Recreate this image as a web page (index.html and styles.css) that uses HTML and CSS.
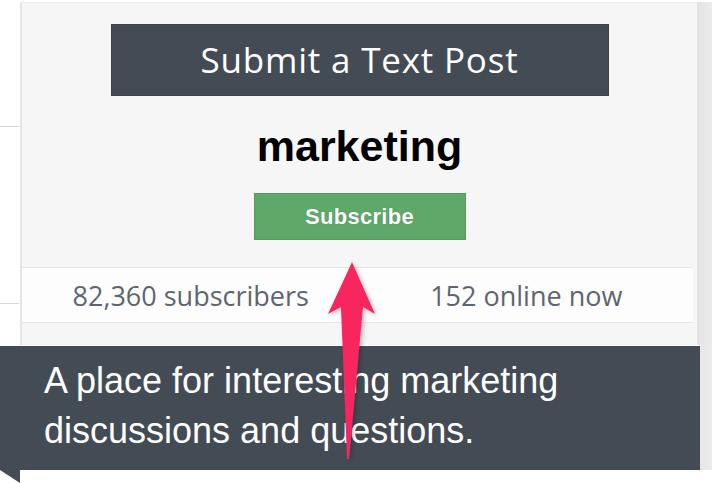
FILE: index.html
```html
<!DOCTYPE html>
<html lang="en">
<head>
<meta charset="UTF-8">
<title>marketing</title>
<link rel="stylesheet" href="styles.css">
</head>
<body>
  <div class="page">
    <div class="top">
      <div class="gutter">
        <span class="rule rule-a"></span>
        <span class="rule rule-b"></span>
      </div>
      <div class="panel">
        <div class="submit">Submit a Text Post</div>
        <h1 class="name">marketing</h1>
        <div class="subscribe">Subscribe</div>
        <div class="stats">
          <span>82,360 subscribers</span>
          <span>152 online now</span>
        </div>
      </div>
      <div class="scroll"></div>
    </div>
    <div class="bottom">
      <div class="callout">
        <p>A place for interesting marketing<br>discussions and questions.</p>
      </div>
      <div class="scroll scroll-low"></div>
    </div>
    <div class="tail"></div>

    <svg class="arrow" width="70" height="210" viewBox="320 255 70 210">
      <defs>
        <filter id="shade" x="-30%" y="-10%" width="160%" height="120%">
          <feDropShadow dx="2" dy="2" stdDeviation="2" flood-color="#000" flood-opacity="0.25"/>
        </filter>
      </defs>
      <polygon filter="url(#shade)" fill="#f7265f"
        points="352,262 375,314 363,307 349,459 347,459 341,307 328,314"/>
    </svg>
  </div>
</body>
</html>
```
FILE: styles.css
```css
* {
  margin: 0;
  padding: 0;
  box-sizing: border-box;
}
body {
  background: #fff;
  font-family: "Open Sans", sans-serif;
}
.page {
  position: relative;
  width: 717px;
  height: 483px;
  overflow: hidden;
  padding-top: 2px;
}
.top {
  display: flex;
  height: 343px;
}
.gutter {
  position: relative;
  width: 20px;
  flex: none;
}
  .rule {
    position: absolute;
    left: 0;
    width: 19px;
    height: 1px;
    background: #d3d7db;
  }
  .rule-a { top: 124px; }
  .rule-b { top: 301px; }
.panel {
  width: 677px;
  flex: none;
  background: #f6f6f6;
  border-left: 2px solid #e1e6ea;
  border-top: 1px solid #ececec;
  display: flex;
  flex-direction: column;
  align-items: center;
  padding-top: 21px;
}
.submit {
  width: 498px;
  height: 72px;
  background: #434b54;
  border: 1px solid #3a4149;
  color: #fff;
  font-size: 35px;
  letter-spacing: 0.8px;
  display: flex;
  align-items: center;
  justify-content: center;
  padding-bottom: 2px;
}
.name {
  font-family: "Liberation Sans", Arial, sans-serif;
  font-size: 43px;
  font-weight: bold;
  color: #000;
  line-height: 48px;
  margin-top: 26px;
}
.subscribe {
  width: 212px;
  height: 47px;
  margin-top: 23px;
  background: #5ea86a;
  border: 1px solid #549a60;
  color: #fff;
  font-family: "Liberation Sans", Arial, sans-serif;
  font-weight: bold;
  font-size: 22px;
  letter-spacing: 0.3px;
  display: flex;
  align-items: center;
  justify-content: center;
  text-shadow: 0 0 1px rgba(0, 0, 0, 0.3);
}
.stats {
  align-self: stretch;
  margin-right: 4px;
  margin-top: 27px;
  height: 56px;
  background: #fdfdfd;
  border-top: 1px solid #e6e6e6;
  border-bottom: 1px solid #e6e6e6;
  display: grid;
  grid-template-columns: 1fr 1fr;
  align-items: center;
  color: #5d6670;
  font-size: 27px;
}
  .stats span {
    text-align: center;
    padding-left: 2px;
  }
.scroll {
  width: 15px;
  flex: none;
  background: linear-gradient(to right, #e2e2e2, #ececec);
}
.bottom {
  display: flex;
  height: 125px;
}
.callout {
  width: 700px;
  flex: none;
  background: #434b54;
  border-top: 1px solid #fff;
  padding: 10px 0 0 44px;
  color: #fff;
  font-family: "Liberation Sans", Arial, sans-serif;
  font-size: 36px;
  line-height: 50px;
}
.scroll-low {
  width: 12px;
  background: linear-gradient(to right, #e6e6e6, #ececec);
}
.tail {
  width: 20px;
  height: 13px;
  background: #434b54;
  clip-path: polygon(0 0, 100% 0, 100% 100%);
}
.arrow {
  position: absolute;
  left: 320px;
  top: 255px;
}
```
